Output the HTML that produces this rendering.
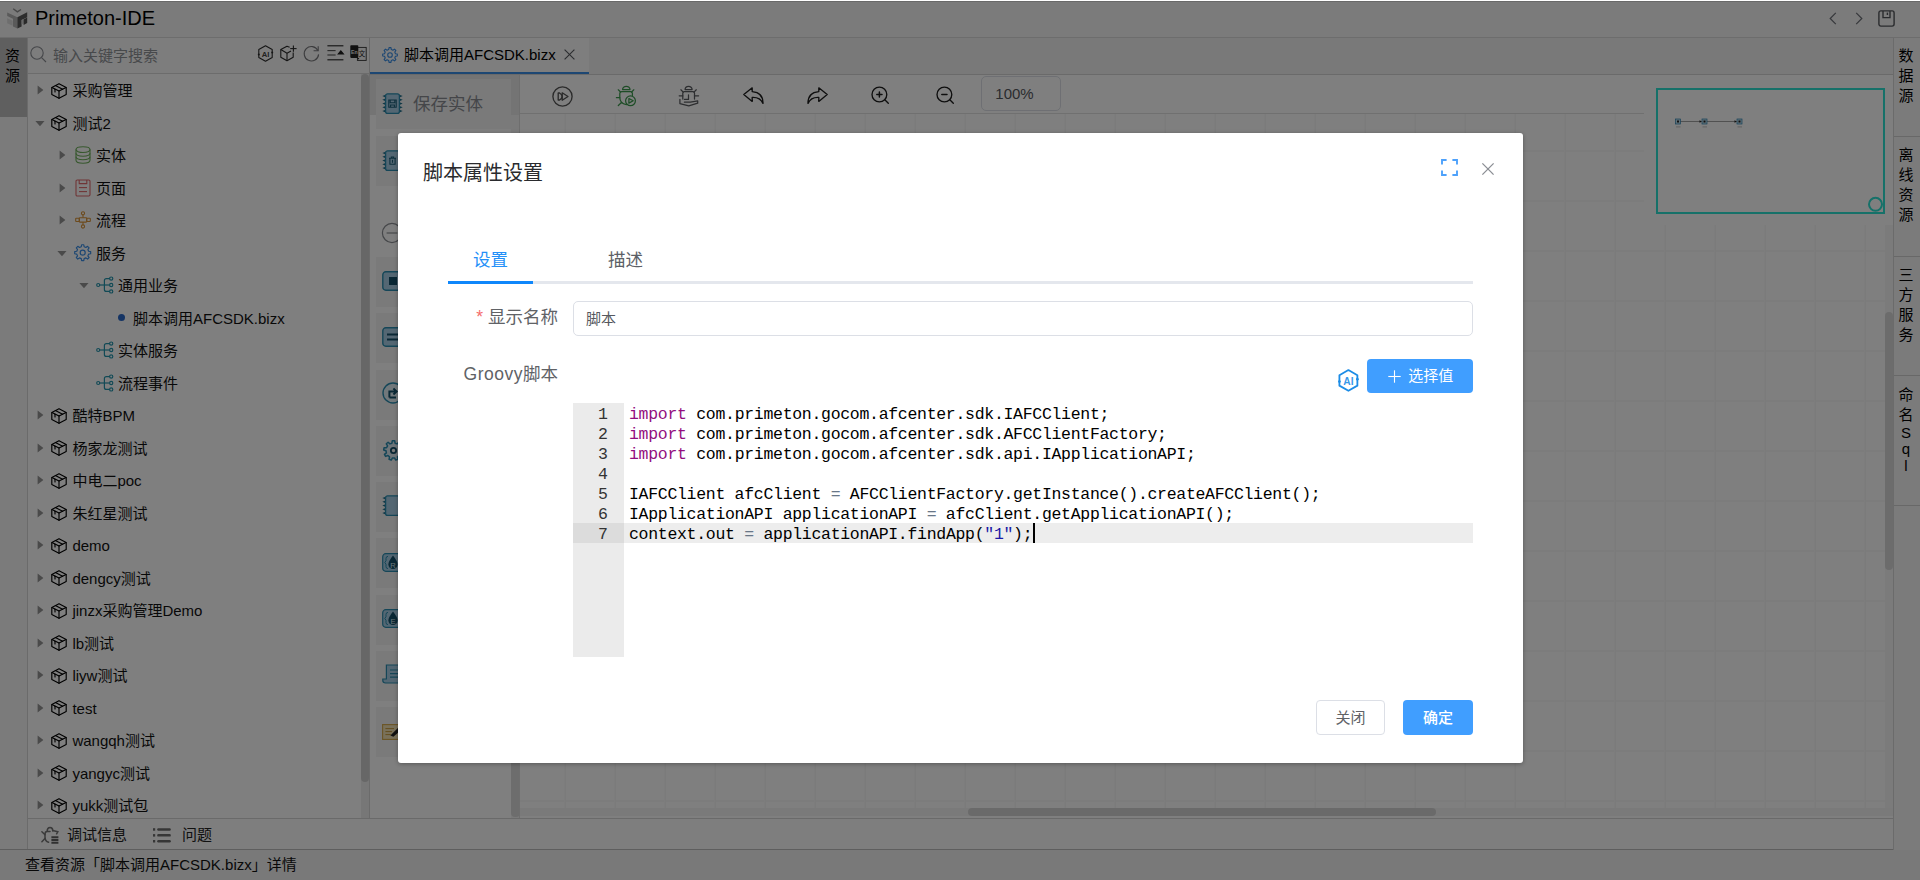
<!DOCTYPE html>
<html lang="zh-CN"><head><meta charset="utf-8"><title>Primeton-IDE</title>
<style>
*{box-sizing:border-box;margin:0;padding:0}
html,body{width:1920px;height:880px;overflow:hidden;background:#fff;font-family:"Liberation Sans","Noto Sans CJK SC",sans-serif;font-size:15px;color:#1a1a1a}
.abs{position:absolute}
svg{display:block;overflow:visible}
#app{position:absolute;left:0;top:0;width:1920px;height:880px;background:#fff;overflow:hidden;z-index:0}
#mask{position:absolute;left:0;top:0;width:1920px;height:880px;background:rgba(0,0,0,.5)}
.hdr{left:0;top:0;width:1920px;height:38px;background:#f6f6f6;border-bottom:1px solid #dadada}
.hdr .ttl{left:35px;top:0;height:37px;line-height:36px;font-size:20px;color:#000;white-space:nowrap}
.lstrip{left:0;top:38px;width:28px;height:812px;background:#f7f7f7;border-right:1px solid #d6d6d6}
.lstrip .sel{left:0;top:0;width:27px;height:79px;background:#bfbfbf}
.vtxt{width:15px;font-size:15px;line-height:20px;text-align:center;color:#000}
.sbar{left:28px;top:38px;width:342px;height:36px;background:#fafafa;border-bottom:1px solid #d8d8d8;border-right:1px solid #d2d2d2}
.sbar .ph{left:25px;top:0;line-height:35px;font-size:15px;color:#8f9297;white-space:nowrap}
.tree{left:28px;top:74px;width:342px;height:744px;background:#fff;border-right:1px solid #d6d6d6;overflow:hidden}
.row{position:absolute;left:0;width:333px;height:32.5px;white-space:nowrap}
.row .t{position:absolute;top:1px;line-height:32.5px;font-size:15px;color:#111}
.bbar{left:28px;top:818px;width:1865px;height:32px;background:#fcfcfc;border-top:1px solid #d4d4d4}
.bbar .t{top:0;line-height:31px;font-size:15px;color:#222;white-space:nowrap}
.status{left:0;top:849px;width:1920px;height:31px;background:#f3f3f3;border-top:1px solid #bcbcbc}
.status .t{left:25px;top:0;line-height:29px;font-size:15px;color:#111;white-space:nowrap}
.rstrip{left:1893px;top:38px;width:27px;height:812px;background:#f7f7f7;border-left:1px solid #d6d6d6}
.rsec{left:0;width:27px;border-bottom:1px solid #d0d0d0}
.tabs{left:370px;top:38px;width:1523px;height:37px;background:#f3f3f3;border-bottom:1px solid #d4d4d4;z-index:2}
.tab{left:0;top:0;width:219px;height:36px;background:#fdfdfd;border-bottom:2px solid #3a8ee6}
.tab .t{left:34px;top:0;line-height:33px;font-size:15px;color:#000;white-space:nowrap}
.pal{left:370px;top:74px;width:150px;height:744px;background:#fff;border-right:1px solid #dcdcdc;overflow:hidden}
.pit{position:absolute;left:6px;width:135px;height:50px;background:#f4f4f4}
.pit .t{position:absolute;left:37px;top:0;line-height:50px;font-size:17.5px;color:#8a8d93;white-space:nowrap}
.tbar{left:520px;top:74px;width:1373px;height:40px;background:#fff;border-bottom:1px solid #e0e0e0}
.zoom{left:461px;top:2px;width:80px;height:35px;border:1px solid #dcdfe6;border-radius:5px;font-size:15px;color:#55585e;line-height:33px;text-align:center;padding-right:13px}
.canvas{left:520px;top:114px;width:1373px;height:704px;background-color:#fff;
background-image:linear-gradient(to right,#fbfbfb 1px,#f6f6f6 1px,#f6f6f6 2px,transparent 2px),linear-gradient(to bottom,#f8f8f8 1px,#f8f8f8 2px,transparent 2px);background-size:50px 50px;background-position:44px 36px}
.dlg{position:absolute;left:398px;top:133px;width:1125px;height:630px;background:#fff;border-radius:3px;box-shadow:0 1px 4px rgba(0,0,0,.3)}
.dlg .title{left:25px;top:26px;font-size:20px;line-height:28px;color:#2a2b2e;white-space:nowrap}
.tabline{left:50px;top:148px;width:1025px;height:3px;background:#e4e7ed}
.tabact{left:50px;top:148px;width:85px;height:3px;background:#0f87fb}
.tb1{left:75px;top:112px;font-size:17.5px;line-height:30px;color:#2490f8;white-space:nowrap}
.tb2{left:210px;top:112px;font-size:17.5px;line-height:30px;color:#5c5f66;white-space:nowrap}
.lbl{font-size:17.5px;line-height:35px;color:#606266;white-space:nowrap;text-align:right}
.inp{left:175px;top:168px;width:900px;height:35px;border:1px solid #dcdfe6;border-radius:5px;font-size:15px;line-height:33px;color:#55585e;padding-left:12px}
.btnp{background:#409eff;color:#fff;border-radius:4px;font-size:15px;text-align:center;white-space:nowrap}
.btnd{background:#fff;color:#606266;border:1px solid #dcdfe6;border-radius:4px;font-size:15px;text-align:center;white-space:nowrap}
.ed{left:175px;top:270px;width:900px;height:254px;background:#fff;overflow:hidden;font-family:"Liberation Mono","DejaVu Sans Mono",monospace;font-size:16.5px;letter-spacing:-.3px;line-height:20px;color:#000}
.gut{left:0;top:0;width:51px;height:254px;background:#ebebeb}
.ln{position:absolute;left:0;width:34.7px;text-align:right;color:#333;height:20px}
.cl{position:absolute;left:56px;white-space:pre;height:20px}
.jp{font-family:"Liberation Sans","Noto Sans CJK JP",sans-serif}
.kw{color:#930f80}.op{color:#687687}.st{color:#1a1aa6}
</style></head>
<body>
<div id="app">
<div class="abs hdr">
<svg class="abs" style="left:6.8px;top:7.8px" width="21" height="21" viewBox="0 0 21 21"><path d="M6.2 0.7 L10.4 3.8 L14 1.5" fill="none" stroke="#909090" stroke-width="1.4"/><path d="M0.2 4.4 L10.4 9.2 L10.4 20.6 L6 18.5 L6 10.8 L0.2 8.1 Z" fill="#b4b4b4"/><path d="M0.2 10.2 L5.6 12.7 L5.6 17.8 L0.2 15.3 Z" fill="#dcdcdc"/><path d="M10.4 9.2 L20.2 4.2 L20.2 9.3 L14.6 12.1 L14.6 18.5 L10.4 20.6 Z" fill="#5a5a5a"/><path d="M14.6 12.1 L16.6 11.1 L16.6 15.6 L14.6 16.6 Z" fill="#d0d0d0"/><path d="M16.6 11.4 L20.2 9.6 L20.2 15.1 L16.6 16.9 Z" fill="#525252"/></svg>
<div class="abs ttl">Primeton-IDE</div>
<svg class="abs" style="left:1829px;top:12px" width="8" height="13" viewBox="0 0 8 13" fill="none" stroke="#6d7077" stroke-width="1.2"><path d="M6.8 0.8 L1.2 6.5 L6.8 12.2"/></svg>
<svg class="abs" style="left:1855px;top:12px" width="8" height="13" viewBox="0 0 8 13" fill="none" stroke="#6d7077" stroke-width="1.2"><path d="M1.2 0.8 L6.8 6.5 L1.2 12.2"/></svg>
<svg class="abs" style="left:1878px;top:10px" width="17" height="17" viewBox="0 0 17 17" fill="none" stroke="#55575c" stroke-width="1.4"><rect x="0.9" y="0.9" width="15.2" height="15.2" rx="2"/><path d="M5 1 V7.6 H12 V1"/><path d="M9.4 2.6 V5"/></svg>
</div>
<div class="abs lstrip"><div class="abs sel"></div><div class="abs vtxt" style="left:5px;top:7.5px">资源</div></div>
<div class="abs sbar">
<svg class="abs" style="left:2px;top:8px" width="17" height="17" viewBox="0 0 17 17" fill="none" stroke="#8a8d93" stroke-width="1.1"><circle cx="7" cy="7" r="6.2"/><path d="M11.6 11.6 L16 16"/></svg>
<div class="abs ph">输入关键字搜索</div>
<svg class="abs" style="left:228.5px;top:6.5px" width="17" height="17" viewBox="0 0 17 17"><path d="M8.5 0.8 L15.2 4.6 V12.4 L8.5 16.2 L1.8 12.4 V4.6 Z" fill="none" stroke="#2b2b2b" stroke-width="1.1" stroke-linejoin="round"/><circle cx="1.8" cy="9.4" r="1" fill="#2b2b2b"/><circle cx="15.2" cy="7.6" r="1" fill="#2b2b2b"/><text x="8.5" y="11.6" text-anchor="middle" font-family="Liberation Sans,sans-serif" font-size="7.6" font-weight="bold" fill="#2b2b2b" fill-opacity=".9">AI</text></svg>
<svg class="abs" style="left:252px;top:7px" width="17" height="17" viewBox="0 0 17 17" fill="none" stroke="#2b2b2b" stroke-width="1.1" stroke-linejoin="round"><path d="M9.6 2.2 L7 1.2 L0.8 4.6 V12.2 L7 15.8 L13.2 12.2 V7.6"/><path d="M0.8 4.6 L7 8.2 L11 6"/><path d="M7 8.2 V15.8"/><path d="M13.4 0.4 V6.8"/><path d="M10.2 3.6 H16.6"/></svg>
<svg class="abs" style="left:275px;top:7px" width="17" height="17" viewBox="0 0 17 17" fill="none" stroke="#77777b" stroke-width="1.1"><path d="M14.9 5.6 A7.2 7.2 0 1 0 15.6 9.4"/><path d="M15.2 1.2 V5.8 H10.6"/></svg>
<svg class="abs" style="left:299px;top:7px" width="17" height="16" viewBox="0 0 17 16" fill="none" stroke="#1f1f1f" stroke-width="1.1"><path d="M0.4 0.8 H16.4"/><path d="M0.4 14.8 H16.4"/><path d="M0.4 5.6 H8.6" stroke="#555"/><path d="M0.4 10 H8.6" stroke="#555"/><path d="M11.2 9 L13.8 5.8 L16.4 9 Z" fill="#1f1f1f"/></svg>
<svg class="abs" style="left:322px;top:7px" width="17" height="16" viewBox="0 0 17 16"><rect x="7.4" y="2.4" width="8.8" height="13" fill="#f4f4f4" stroke="#333" stroke-width="0.9"/><rect x="0.3" y="0.3" width="8" height="12.6" rx="0.8" fill="#222"/><path d="M7 12.9 L9.4 12.9 L8.3 14.6 Z" fill="#222"/><text x="4.3" y="8.6" text-anchor="middle" font-family="Liberation Sans,sans-serif" font-size="5.2" font-weight="bold" fill="#eee">En</text><text x="11.9" y="11.4" text-anchor="middle" font-family="Noto Sans CJK SC,sans-serif" font-size="6.4" fill="#222">文</text></svg>
</div>
<div class="abs tree">
<div class="row" style="top:0px">
<svg class="abs" style="left:8.7px;top:11px" width="7" height="10" viewBox="0 0 7 10"><path d="M0.6 0.4 L6.4 5 L0.6 9.6 Z" fill="#949494"/></svg>
<svg class="abs" style="left:23px;top:8.5px" width="16" height="16" viewBox="0 0 16 16" fill="none" stroke="#000" stroke-width="1.15" stroke-linejoin="round" stroke-linecap="round"><path d="M8 0.7 L15.2 4.4 V11.6 L8 15.3 L0.8 11.6 V4.4 Z"/><path d="M1 4.5 L8 8.1 L15 4.5"/><path d="M8 8.1 V15.2"/><path d="M4.4 2.6 L11.6 6.3"/><path d="M4 6.2 V9"/></svg>
<div class="t" style="left:44.4px">采购管理</div>
</div>
<div class="row" style="top:32.5px">
<svg class="abs" style="left:6.9px;top:13.3px" width="10" height="7" viewBox="0 0 10 7"><path d="M0.4 1 L9.5 1 L5 6.3 Z" fill="#949494"/></svg>
<svg class="abs" style="left:23px;top:8.5px" width="16" height="16" viewBox="0 0 16 16" fill="none" stroke="#000" stroke-width="1.15" stroke-linejoin="round" stroke-linecap="round"><path d="M8 0.7 L15.2 4.4 V11.6 L8 15.3 L0.8 11.6 V4.4 Z"/><path d="M1 4.5 L8 8.1 L15 4.5"/><path d="M8 8.1 V15.2"/><path d="M4.4 2.6 L11.6 6.3"/><path d="M4 6.2 V9"/></svg>
<div class="t" style="left:44.4px">测试2</div>
</div>
<div class="row" style="top:65px">
<svg class="abs" style="left:31px;top:11px" width="7" height="10" viewBox="0 0 7 10"><path d="M0.6 0.4 L6.4 5 L0.6 9.6 Z" fill="#949494"/></svg>
<svg class="abs" style="left:46.5px;top:7px" width="16" height="18" viewBox="0 0 16 18" fill="none" stroke="#6fb05c" stroke-width="1.1"><ellipse cx="8" cy="3.6" rx="7" ry="2.9"/><path d="M1 3.6 V14.2 C1 16 4 17.2 8 17.2 S15 16 15 14.2 V3.6"/><path d="M1 7.3 C1 9 4 10.2 8 10.2 S15 9 15 7.3"/><path d="M1 10.8 C1 12.5 4 13.7 8 13.7 S15 12.5 15 10.8"/></svg>
<div class="t" style="left:68px">实体</div>
</div>
<div class="row" style="top:97.5px">
<svg class="abs" style="left:31px;top:11px" width="7" height="10" viewBox="0 0 7 10"><path d="M0.6 0.4 L6.4 5 L0.6 9.6 Z" fill="#949494"/></svg>
<svg class="abs" style="left:46.5px;top:7.5px" width="16" height="18" viewBox="0 0 16 18" fill="none" stroke="#e0696c" stroke-width="1.1"><rect x="1" y="1" width="14" height="16" rx="1.2"/><path d="M4.2 1 V4.6 H11.8 V1"/><path d="M4 8.6 H12"/><path d="M4 12.6 H12"/></svg>
<div class="t" style="left:68px">页面</div>
</div>
<div class="row" style="top:130px">
<svg class="abs" style="left:31px;top:11px" width="7" height="10" viewBox="0 0 7 10"><path d="M0.6 0.4 L6.4 5 L0.6 9.6 Z" fill="#949494"/></svg>
<svg class="abs" style="left:46.9px;top:7px" width="16" height="18" viewBox="0 0 16 18" fill="none" stroke="#d9953b" stroke-width="1.1"><circle cx="8" cy="2.3" r="1.6"/><circle cx="8" cy="15.5" r="1.6"/><path d="M8 3.9 V6.7"/><path d="M8 11.1 V13.9"/><rect x="4.3" y="6.7" width="7.4" height="4.4" rx="0.6"/><rect x="0.7" y="7.3" width="3.6" height="3.2" rx="0.5"/><rect x="11.7" y="7.3" width="3.6" height="3.2" rx="0.5"/></svg>
<div class="t" style="left:68px">流程</div>
</div>
<div class="row" style="top:162.5px">
<svg class="abs" style="left:29.4px;top:13.3px" width="10" height="7" viewBox="0 0 10 7"><path d="M0.4 1 L9.5 1 L5 6.3 Z" fill="#949494"/></svg>
<svg class="abs" style="left:45.8px;top:7.7px" width="17.4" height="17.4" viewBox="0 0 16 16" fill="none" stroke="#3a8ee6" stroke-width="1.1" stroke-linejoin="round"><path d="M6.69 2.55 L7.01 0.67 L8.99 0.67 L9.31 2.55 L10.93 3.23 L12.49 2.12 L13.88 3.51 L12.77 5.07 L13.45 6.69 L15.33 7.01 L15.33 8.99 L13.45 9.31 L12.77 10.93 L13.88 12.49 L12.49 13.88 L10.93 12.77 L9.31 13.45 L8.99 15.33 L7.01 15.33 L6.69 13.45 L5.07 12.77 L3.51 13.88 L2.12 12.49 L3.23 10.93 L2.55 9.31 L0.67 8.99 L0.67 7.01 L2.55 6.69 L3.23 5.07 L2.12 3.51 L3.51 2.12 L5.07 3.23 Z"/><circle cx="8" cy="8" r="2.3"/></svg>
<div class="t" style="left:68px">服务</div>
</div>
<div class="row" style="top:195px">
<svg class="abs" style="left:51.4px;top:13.3px" width="10" height="7" viewBox="0 0 10 7"><path d="M0.4 1 L9.5 1 L5 6.3 Z" fill="#949494"/></svg>
<svg class="abs" style="left:68px;top:7px" width="18" height="18" viewBox="0 0 18 18" fill="none" stroke="#2595ad" stroke-width="1.2"><circle cx="2.2" cy="9" r="1.5"/><path d="M3.7 9 H13.6"/><path d="M13.6 2.6 H10.4 Q8.4 2.6 8.4 4.6 V13.4 Q8.4 15.4 10.4 15.4 H13.6"/><circle cx="15.2" cy="2.6" r="1.6"/><circle cx="15.2" cy="9" r="1.6"/><circle cx="15.2" cy="15.4" r="1.6"/></svg>
<div class="t" style="left:90px">通用业务</div>
</div>
<div class="row" style="top:227.5px">
<div class="abs" style="left:90.2px;top:12.8px;width:7px;height:7px;border-radius:50%;background:#2a68c8"></div>
<div class="t" style="left:105px">脚本调用AFCSDK.bizx</div>
</div>
<div class="row" style="top:260px">
<svg class="abs" style="left:68px;top:7px" width="18" height="18" viewBox="0 0 18 18" fill="none" stroke="#2595ad" stroke-width="1.2"><circle cx="2.2" cy="9" r="1.5"/><path d="M3.7 9 H13.6"/><path d="M13.6 2.6 H10.4 Q8.4 2.6 8.4 4.6 V13.4 Q8.4 15.4 10.4 15.4 H13.6"/><circle cx="15.2" cy="2.6" r="1.6"/><circle cx="15.2" cy="9" r="1.6"/><circle cx="15.2" cy="15.4" r="1.6"/></svg>
<div class="t" style="left:90px">实体服务</div>
</div>
<div class="row" style="top:292.5px">
<svg class="abs" style="left:68px;top:7px" width="18" height="18" viewBox="0 0 18 18" fill="none" stroke="#2595ad" stroke-width="1.2"><circle cx="2.2" cy="9" r="1.5"/><path d="M3.7 9 H13.6"/><path d="M13.6 2.6 H10.4 Q8.4 2.6 8.4 4.6 V13.4 Q8.4 15.4 10.4 15.4 H13.6"/><circle cx="15.2" cy="2.6" r="1.6"/><circle cx="15.2" cy="9" r="1.6"/><circle cx="15.2" cy="15.4" r="1.6"/></svg>
<div class="t" style="left:90px">流程事件</div>
</div>
<div class="row" style="top:325px">
<svg class="abs" style="left:8.7px;top:11px" width="7" height="10" viewBox="0 0 7 10"><path d="M0.6 0.4 L6.4 5 L0.6 9.6 Z" fill="#949494"/></svg>
<svg class="abs" style="left:23px;top:8.5px" width="16" height="16" viewBox="0 0 16 16" fill="none" stroke="#000" stroke-width="1.15" stroke-linejoin="round" stroke-linecap="round"><path d="M8 0.7 L15.2 4.4 V11.6 L8 15.3 L0.8 11.6 V4.4 Z"/><path d="M1 4.5 L8 8.1 L15 4.5"/><path d="M8 8.1 V15.2"/><path d="M4.4 2.6 L11.6 6.3"/><path d="M4 6.2 V9"/></svg>
<div class="t" style="left:44.4px">酷特BPM</div>
</div>
<div class="row" style="top:357.5px">
<svg class="abs" style="left:8.7px;top:11px" width="7" height="10" viewBox="0 0 7 10"><path d="M0.6 0.4 L6.4 5 L0.6 9.6 Z" fill="#949494"/></svg>
<svg class="abs" style="left:23px;top:8.5px" width="16" height="16" viewBox="0 0 16 16" fill="none" stroke="#000" stroke-width="1.15" stroke-linejoin="round" stroke-linecap="round"><path d="M8 0.7 L15.2 4.4 V11.6 L8 15.3 L0.8 11.6 V4.4 Z"/><path d="M1 4.5 L8 8.1 L15 4.5"/><path d="M8 8.1 V15.2"/><path d="M4.4 2.6 L11.6 6.3"/><path d="M4 6.2 V9"/></svg>
<div class="t" style="left:44.4px">杨家龙测试</div>
</div>
<div class="row" style="top:390px">
<svg class="abs" style="left:8.7px;top:11px" width="7" height="10" viewBox="0 0 7 10"><path d="M0.6 0.4 L6.4 5 L0.6 9.6 Z" fill="#949494"/></svg>
<svg class="abs" style="left:23px;top:8.5px" width="16" height="16" viewBox="0 0 16 16" fill="none" stroke="#000" stroke-width="1.15" stroke-linejoin="round" stroke-linecap="round"><path d="M8 0.7 L15.2 4.4 V11.6 L8 15.3 L0.8 11.6 V4.4 Z"/><path d="M1 4.5 L8 8.1 L15 4.5"/><path d="M8 8.1 V15.2"/><path d="M4.4 2.6 L11.6 6.3"/><path d="M4 6.2 V9"/></svg>
<div class="t" style="left:44.4px">中电二poc</div>
</div>
<div class="row" style="top:422.5px">
<svg class="abs" style="left:8.7px;top:11px" width="7" height="10" viewBox="0 0 7 10"><path d="M0.6 0.4 L6.4 5 L0.6 9.6 Z" fill="#949494"/></svg>
<svg class="abs" style="left:23px;top:8.5px" width="16" height="16" viewBox="0 0 16 16" fill="none" stroke="#000" stroke-width="1.15" stroke-linejoin="round" stroke-linecap="round"><path d="M8 0.7 L15.2 4.4 V11.6 L8 15.3 L0.8 11.6 V4.4 Z"/><path d="M1 4.5 L8 8.1 L15 4.5"/><path d="M8 8.1 V15.2"/><path d="M4.4 2.6 L11.6 6.3"/><path d="M4 6.2 V9"/></svg>
<div class="t" style="left:44.4px">朱红星测试</div>
</div>
<div class="row" style="top:455px">
<svg class="abs" style="left:8.7px;top:11px" width="7" height="10" viewBox="0 0 7 10"><path d="M0.6 0.4 L6.4 5 L0.6 9.6 Z" fill="#949494"/></svg>
<svg class="abs" style="left:23px;top:8.5px" width="16" height="16" viewBox="0 0 16 16" fill="none" stroke="#000" stroke-width="1.15" stroke-linejoin="round" stroke-linecap="round"><path d="M8 0.7 L15.2 4.4 V11.6 L8 15.3 L0.8 11.6 V4.4 Z"/><path d="M1 4.5 L8 8.1 L15 4.5"/><path d="M8 8.1 V15.2"/><path d="M4.4 2.6 L11.6 6.3"/><path d="M4 6.2 V9"/></svg>
<div class="t" style="left:44.4px">demo</div>
</div>
<div class="row" style="top:487.5px">
<svg class="abs" style="left:8.7px;top:11px" width="7" height="10" viewBox="0 0 7 10"><path d="M0.6 0.4 L6.4 5 L0.6 9.6 Z" fill="#949494"/></svg>
<svg class="abs" style="left:23px;top:8.5px" width="16" height="16" viewBox="0 0 16 16" fill="none" stroke="#000" stroke-width="1.15" stroke-linejoin="round" stroke-linecap="round"><path d="M8 0.7 L15.2 4.4 V11.6 L8 15.3 L0.8 11.6 V4.4 Z"/><path d="M1 4.5 L8 8.1 L15 4.5"/><path d="M8 8.1 V15.2"/><path d="M4.4 2.6 L11.6 6.3"/><path d="M4 6.2 V9"/></svg>
<div class="t" style="left:44.4px">dengcy测试</div>
</div>
<div class="row" style="top:520px">
<svg class="abs" style="left:8.7px;top:11px" width="7" height="10" viewBox="0 0 7 10"><path d="M0.6 0.4 L6.4 5 L0.6 9.6 Z" fill="#949494"/></svg>
<svg class="abs" style="left:23px;top:8.5px" width="16" height="16" viewBox="0 0 16 16" fill="none" stroke="#000" stroke-width="1.15" stroke-linejoin="round" stroke-linecap="round"><path d="M8 0.7 L15.2 4.4 V11.6 L8 15.3 L0.8 11.6 V4.4 Z"/><path d="M1 4.5 L8 8.1 L15 4.5"/><path d="M8 8.1 V15.2"/><path d="M4.4 2.6 L11.6 6.3"/><path d="M4 6.2 V9"/></svg>
<div class="t" style="left:44.4px">jinzx采购管理Demo</div>
</div>
<div class="row" style="top:552.5px">
<svg class="abs" style="left:8.7px;top:11px" width="7" height="10" viewBox="0 0 7 10"><path d="M0.6 0.4 L6.4 5 L0.6 9.6 Z" fill="#949494"/></svg>
<svg class="abs" style="left:23px;top:8.5px" width="16" height="16" viewBox="0 0 16 16" fill="none" stroke="#000" stroke-width="1.15" stroke-linejoin="round" stroke-linecap="round"><path d="M8 0.7 L15.2 4.4 V11.6 L8 15.3 L0.8 11.6 V4.4 Z"/><path d="M1 4.5 L8 8.1 L15 4.5"/><path d="M8 8.1 V15.2"/><path d="M4.4 2.6 L11.6 6.3"/><path d="M4 6.2 V9"/></svg>
<div class="t" style="left:44.4px">lb测试</div>
</div>
<div class="row" style="top:585px">
<svg class="abs" style="left:8.7px;top:11px" width="7" height="10" viewBox="0 0 7 10"><path d="M0.6 0.4 L6.4 5 L0.6 9.6 Z" fill="#949494"/></svg>
<svg class="abs" style="left:23px;top:8.5px" width="16" height="16" viewBox="0 0 16 16" fill="none" stroke="#000" stroke-width="1.15" stroke-linejoin="round" stroke-linecap="round"><path d="M8 0.7 L15.2 4.4 V11.6 L8 15.3 L0.8 11.6 V4.4 Z"/><path d="M1 4.5 L8 8.1 L15 4.5"/><path d="M8 8.1 V15.2"/><path d="M4.4 2.6 L11.6 6.3"/><path d="M4 6.2 V9"/></svg>
<div class="t" style="left:44.4px">liyw测试</div>
</div>
<div class="row" style="top:617.5px">
<svg class="abs" style="left:8.7px;top:11px" width="7" height="10" viewBox="0 0 7 10"><path d="M0.6 0.4 L6.4 5 L0.6 9.6 Z" fill="#949494"/></svg>
<svg class="abs" style="left:23px;top:8.5px" width="16" height="16" viewBox="0 0 16 16" fill="none" stroke="#000" stroke-width="1.15" stroke-linejoin="round" stroke-linecap="round"><path d="M8 0.7 L15.2 4.4 V11.6 L8 15.3 L0.8 11.6 V4.4 Z"/><path d="M1 4.5 L8 8.1 L15 4.5"/><path d="M8 8.1 V15.2"/><path d="M4.4 2.6 L11.6 6.3"/><path d="M4 6.2 V9"/></svg>
<div class="t" style="left:44.4px">test</div>
</div>
<div class="row" style="top:650px">
<svg class="abs" style="left:8.7px;top:11px" width="7" height="10" viewBox="0 0 7 10"><path d="M0.6 0.4 L6.4 5 L0.6 9.6 Z" fill="#949494"/></svg>
<svg class="abs" style="left:23px;top:8.5px" width="16" height="16" viewBox="0 0 16 16" fill="none" stroke="#000" stroke-width="1.15" stroke-linejoin="round" stroke-linecap="round"><path d="M8 0.7 L15.2 4.4 V11.6 L8 15.3 L0.8 11.6 V4.4 Z"/><path d="M1 4.5 L8 8.1 L15 4.5"/><path d="M8 8.1 V15.2"/><path d="M4.4 2.6 L11.6 6.3"/><path d="M4 6.2 V9"/></svg>
<div class="t" style="left:44.4px">wangqh测试</div>
</div>
<div class="row" style="top:682.5px">
<svg class="abs" style="left:8.7px;top:11px" width="7" height="10" viewBox="0 0 7 10"><path d="M0.6 0.4 L6.4 5 L0.6 9.6 Z" fill="#949494"/></svg>
<svg class="abs" style="left:23px;top:8.5px" width="16" height="16" viewBox="0 0 16 16" fill="none" stroke="#000" stroke-width="1.15" stroke-linejoin="round" stroke-linecap="round"><path d="M8 0.7 L15.2 4.4 V11.6 L8 15.3 L0.8 11.6 V4.4 Z"/><path d="M1 4.5 L8 8.1 L15 4.5"/><path d="M8 8.1 V15.2"/><path d="M4.4 2.6 L11.6 6.3"/><path d="M4 6.2 V9"/></svg>
<div class="t" style="left:44.4px">yangyc测试</div>
</div>
<div class="row" style="top:715px">
<svg class="abs" style="left:8.7px;top:11px" width="7" height="10" viewBox="0 0 7 10"><path d="M0.6 0.4 L6.4 5 L0.6 9.6 Z" fill="#949494"/></svg>
<svg class="abs" style="left:23px;top:8.5px" width="16" height="16" viewBox="0 0 16 16" fill="none" stroke="#000" stroke-width="1.15" stroke-linejoin="round" stroke-linecap="round"><path d="M8 0.7 L15.2 4.4 V11.6 L8 15.3 L0.8 11.6 V4.4 Z"/><path d="M1 4.5 L8 8.1 L15 4.5"/><path d="M8 8.1 V15.2"/><path d="M4.4 2.6 L11.6 6.3"/><path d="M4 6.2 V9"/></svg>
<div class="t" style="left:44.4px">yukk测试包</div>
</div>
<div class="abs" style="left:333px;top:0;width:8px;height:744px;background:#efefef"></div>
<div class="abs" style="left:333px;top:0;width:8px;height:708px;background:#cfcfcf;border-radius:4px"></div>
</div>
<div class="abs bbar">
<svg class="abs" style="left:13px;top:7px" width="19" height="18" viewBox="0 0 19 18" fill="none" stroke="#747474" stroke-width="1.5" stroke-linecap="round"><path d="M6.2 5 Q6.2 1.6 9 1.6 Q11.8 1.6 11.8 5"/><path d="M11.8 4.6 L16.8 5.8 L15.6 7.8"/><path d="M9 5.4 H6.2 Q4 5.4 4 8 V11 Q4 15.4 7.6 16.2"/><path d="M4 8.8 L0.9 5.8"/><path d="M4 12.4 L0.9 15.8"/><path d="M10.4 11.2 H17.4 M10.4 14 H17.4 M10.4 16.8 H17.4" stroke-width="1.9" stroke-linecap="butt" stroke="#606060"/></svg>
<div class="abs t" style="left:39px">调试信息</div>
<svg class="abs" style="left:125px;top:8.6px" width="18" height="15" viewBox="0 0 18 15" fill="#6c6c6c"><rect x="0" y="0.2" width="2.2" height="2.5"/><rect x="4.2" y="0.2" width="13.6" height="2.5" rx="1.2"/><rect x="0" y="6.1" width="2.2" height="2.5"/><rect x="4.2" y="6.1" width="13.6" height="2.5" rx="1.2"/><rect x="0" y="12" width="2.2" height="2.5"/><rect x="4.2" y="12" width="13.6" height="2.5" rx="1.2"/></svg>
<div class="abs t" style="left:154px">问题</div>
</div>
<div class="abs status"><div class="abs t">查看资源<span class="jp">「</span>脚本调用AFCSDK.bizx<span class="jp">」</span>详情</div></div>
<div class="abs rstrip">
<div class="abs rsec" style="top:0px;height:99px"><div class="abs vtxt" style="left:4.5px;top:7.5px"><div style="height:20px;line-height:20px">数</div><div style="height:20px;line-height:20px">据</div><div style="height:20px;line-height:20px">源</div></div></div>
<div class="abs rsec" style="top:99px;height:120px"><div class="abs vtxt" style="left:4.5px;top:8px"><div style="height:20px;line-height:20px">离</div><div style="height:20px;line-height:20px">线</div><div style="height:20px;line-height:20px">资</div><div style="height:20px;line-height:20px">源</div></div></div>
<div class="abs rsec" style="top:219px;height:119px"><div class="abs vtxt" style="left:4.5px;top:8px"><div style="height:20px;line-height:20px">三</div><div style="height:20px;line-height:20px">方</div><div style="height:20px;line-height:20px">服</div><div style="height:20px;line-height:20px">务</div></div></div>
<div class="abs rsec" style="top:338px;height:130px"><div class="abs vtxt" style="left:4.5px;top:8.5px"><div style="height:20px;line-height:20px">命</div><div style="height:20px;line-height:20px">名</div><div style="height:16.8px;line-height:16.2px">S</div><div style="height:16.8px;line-height:16.2px">q</div><div style="height:16.8px;line-height:16.2px">l</div></div></div>
</div>
<div class="abs tabs"><div class="abs tab">
<svg class="abs" style="left:11.5px;top:8.5px" width="16" height="16" viewBox="0 0 16 16" fill="none" stroke="#3a8ee6" stroke-width="1.1" stroke-linejoin="round"><path d="M6.69 2.55 L7.01 0.67 L8.99 0.67 L9.31 2.55 L10.93 3.23 L12.49 2.12 L13.88 3.51 L12.77 5.07 L13.45 6.69 L15.33 7.01 L15.33 8.99 L13.45 9.31 L12.77 10.93 L13.88 12.49 L12.49 13.88 L10.93 12.77 L9.31 13.45 L8.99 15.33 L7.01 15.33 L6.69 13.45 L5.07 12.77 L3.51 13.88 L2.12 12.49 L3.23 10.93 L2.55 9.31 L0.67 8.99 L0.67 7.01 L2.55 6.69 L3.23 5.07 L2.12 3.51 L3.51 2.12 L5.07 3.23 Z"/><circle cx="8" cy="8" r="2.3"/></svg>
<div class="abs t">脚本调用AFCSDK.bizx</div>
<svg class="abs" style="left:194px;top:11px" width="11" height="11" viewBox="0 0 11 11" fill="none" stroke="#55585e" stroke-width="1.1"><path d="M0.6 0.6 L10.4 10.4"/><path d="M10.4 0.6 L0.6 10.4"/></svg>
</div></div>
<div class="abs pal">
<div class="abs" style="left:0;top:0;width:150px;height:41px;background:#e8e8e8"></div>
<div class="pit" style="top:5px">
</div>
<div class="pit" style="top:61.75px">
</div>
<div class="pit" style="top:183px">
</div>
<div class="pit" style="top:239.25px">
</div>
<div class="pit" style="top:295.5px">
</div>
<div class="pit" style="top:351.75px">
</div>
<div class="pit" style="top:408px">
</div>
<div class="pit" style="top:464.25px">
</div>
<div class="pit" style="top:520.5px">
</div>
<div class="pit" style="top:576.75px">
</div>
<div class="pit" style="top:633px">
</div>
<div class="pit" style="top:5px;background:none"><div class="t">保存实体</div></div>
<svg class="abs" style="left:12px;top:19px" width="21" height="21.2" viewBox="0 0 21 22" preserveAspectRatio="none"><path d="M3.6 1.7 L0.3 3.2 L3.6 4.7 Z" fill="#1f6f8c"/><path d="M17.4 1.7 L20.7 3.2 L17.4 4.7 Z" fill="#1f6f8c"/><path d="M3.6 5.6 L0.3 7.1 L3.6 8.6 Z" fill="#1f6f8c"/><path d="M17.4 5.6 L20.7 7.1 L17.4 8.6 Z" fill="#1f6f8c"/><path d="M3.6 9.5 L0.3 11.0 L3.6 12.5 Z" fill="#1f6f8c"/><path d="M17.4 9.5 L20.7 11.0 L17.4 12.5 Z" fill="#1f6f8c"/><path d="M3.6 13.4 L0.3 14.9 L3.6 16.4 Z" fill="#1f6f8c"/><path d="M17.4 13.4 L20.7 14.9 L17.4 16.4 Z" fill="#1f6f8c"/><path d="M3.6 17.3 L0.3 18.8 L3.6 20.3 Z" fill="#1f6f8c"/><path d="M17.4 17.3 L20.7 18.8 L17.4 20.3 Z" fill="#1f6f8c"/><rect x="3.6" y="0.8" width="13.8" height="20.4" rx="2" fill="#a8cfe6" stroke="#2a8db0" stroke-width="1.3"/><path d="M6.8 7.2 H14.2 V14.8 H6.8 Z M8.2 7.2 V10.2 H12.8 V7.2 M8.6 14.8 V12.4 H12.4 V14.8" fill="none" stroke="#1d5f7a" stroke-width="1.1"/></svg>
<svg class="abs" style="left:12px;top:75.9px" width="21" height="21.2" viewBox="0 0 21 22" preserveAspectRatio="none"><path d="M3.6 1.7 L0.3 3.2 L3.6 4.7 Z" fill="#1f6f8c"/><path d="M17.4 1.7 L20.7 3.2 L17.4 4.7 Z" fill="#1f6f8c"/><path d="M3.6 5.6 L0.3 7.1 L3.6 8.6 Z" fill="#1f6f8c"/><path d="M17.4 5.6 L20.7 7.1 L17.4 8.6 Z" fill="#1f6f8c"/><path d="M3.6 9.5 L0.3 11.0 L3.6 12.5 Z" fill="#1f6f8c"/><path d="M17.4 9.5 L20.7 11.0 L17.4 12.5 Z" fill="#1f6f8c"/><path d="M3.6 13.4 L0.3 14.9 L3.6 16.4 Z" fill="#1f6f8c"/><path d="M17.4 13.4 L20.7 14.9 L17.4 16.4 Z" fill="#1f6f8c"/><path d="M3.6 17.3 L0.3 18.8 L3.6 20.3 Z" fill="#1f6f8c"/><path d="M17.4 17.3 L20.7 18.8 L17.4 20.3 Z" fill="#1f6f8c"/><rect x="3.6" y="0.8" width="13.8" height="20.4" rx="2" fill="#a8cfe6" stroke="#2a8db0" stroke-width="1.3"/><path d="M7 8.6 H14 M7.9 8.6 V14.8 H13.1 V8.6 M9.4 8.6 V7.2 H11.6 V8.6 M10.5 10.2 V13.2" fill="none" stroke="#1d5f7a" stroke-width="1.1"/></svg>
<svg class="abs" style="left:10.8px;top:148px" width="22" height="22" viewBox="0 0 22 22" fill="none" stroke="#8c8f94" stroke-width="1.2"><circle cx="11" cy="11" r="9.6"/><path d="M5.6 11 H16.4"/></svg>
<svg class="abs" style="left:12px;top:197px" width="22" height="20" viewBox="0 0 22 20"><rect x="0.8" y="0.8" width="20.4" height="18.4" rx="3" fill="#a8cfe6" stroke="#2a8db0" stroke-width="1.4"/><rect x="7" y="6" width="8" height="8" fill="#14506a"/></svg>
<svg class="abs" style="left:12px;top:253px" width="22" height="20" viewBox="0 0 22 20"><rect x="0.8" y="0.8" width="20.4" height="18.4" rx="3" fill="#a8cfe6" stroke="#2a8db0" stroke-width="1.4"/><path d="M5 7.4 H17 M5 12.6 H17" stroke="#14506a" stroke-width="2"/></svg>
<svg class="abs" style="left:12px;top:308px" width="22" height="22" viewBox="0 0 22 22"><circle cx="11" cy="11" r="10" fill="#e3f0f7" stroke="#2a8db0" stroke-width="1.4"/><path d="M7.4 15.4 V9.4 H13 M11.4 6.4 L14.6 9.4 L11.4 12.4 M7.4 15.4 H14" fill="none" stroke="#14506a" stroke-width="2"/></svg>
<svg class="abs" style="left:12.6px;top:365.5px" width="21" height="21" viewBox="0 0 16 16"><path d="M6.81 2.42 L7.11 0.55 L8.89 0.55 L9.19 2.42 L10.68 2.97 L12.11 1.72 L13.47 2.87 L12.49 4.49 L13.28 5.86 L15.18 5.83 L15.49 7.58 L13.70 8.20 L13.42 9.76 L14.89 10.95 L14.01 12.49 L12.24 11.81 L11.02 12.83 L11.38 14.69 L9.71 15.30 L8.79 13.64 L7.21 13.64 L6.29 15.30 L4.62 14.69 L4.98 12.83 L3.76 11.81 L1.99 12.49 L1.11 10.95 L2.58 9.76 L2.30 8.20 L0.51 7.58 L0.82 5.83 L2.72 5.86 L3.51 4.49 L2.53 2.87 L3.89 1.72 L5.32 2.97 Z" fill="#dcebf3" stroke="#2a8db0" stroke-width="1.15" stroke-linejoin="round"/><circle cx="8" cy="8" r="2" fill="#f4f4f4" stroke="#14506a" stroke-width="1.4"/></svg>
<svg class="abs" style="left:12px;top:421px" width="21" height="21.2" viewBox="0 0 21 22" preserveAspectRatio="none"><path d="M3.6 1.7 L0.3 3.2 L3.6 4.7 Z" fill="#1f6f8c"/><path d="M17.4 1.7 L20.7 3.2 L17.4 4.7 Z" fill="#1f6f8c"/><path d="M3.6 5.6 L0.3 7.1 L3.6 8.6 Z" fill="#1f6f8c"/><path d="M17.4 5.6 L20.7 7.1 L17.4 8.6 Z" fill="#1f6f8c"/><path d="M3.6 9.5 L0.3 11.0 L3.6 12.5 Z" fill="#1f6f8c"/><path d="M17.4 9.5 L20.7 11.0 L17.4 12.5 Z" fill="#1f6f8c"/><path d="M3.6 13.4 L0.3 14.9 L3.6 16.4 Z" fill="#1f6f8c"/><path d="M17.4 13.4 L20.7 14.9 L17.4 16.4 Z" fill="#1f6f8c"/><path d="M3.6 17.3 L0.3 18.8 L3.6 20.3 Z" fill="#1f6f8c"/><path d="M17.4 17.3 L20.7 18.8 L17.4 20.3 Z" fill="#1f6f8c"/><rect x="3.6" y="0.8" width="13.8" height="20.4" rx="2" fill="#a8cfe6" stroke="#2a8db0" stroke-width="1.3"/></svg>
<svg class="abs" style="left:12px;top:478.5px" width="24" height="19" viewBox="0 0 24 19"><rect x="0.7" y="0.7" width="22.6" height="17.6" rx="3" fill="#a8cfe6" stroke="#2a8db0" stroke-width="1.2"/><path d="M6 3.4 Q4 3.4 4 5.4 V7.8 L2.8 9.5 L4 11.2 V13.6 Q4 15.6 6 15.6" fill="none" stroke="#2a8db0" stroke-width="1"/><path d="M11 2.6 Q15.6 8.4 15.6 11.4 A4.6 4.6 0 0 1 6.4 11.4 Q6.4 8.4 11 2.6 Z" fill="#14506a"/><text x="11" y="14.6" text-anchor="middle" font-family="Liberation Sans,sans-serif" font-size="7.5" fill="#d6e8f2">R</text></svg>
<svg class="abs" style="left:12px;top:534.75px" width="24" height="19" viewBox="0 0 24 19"><rect x="0.7" y="0.7" width="22.6" height="17.6" rx="3" fill="#a8cfe6" stroke="#2a8db0" stroke-width="1.2"/><path d="M6 3.4 Q4 3.4 4 5.4 V7.8 L2.8 9.5 L4 11.2 V13.6 Q4 15.6 6 15.6" fill="none" stroke="#2a8db0" stroke-width="1"/><path d="M11 2.6 Q15.6 8.4 15.6 11.4 A4.6 4.6 0 0 1 6.4 11.4 Q6.4 8.4 11 2.6 Z" fill="#14506a"/><text x="11" y="14.6" text-anchor="middle" font-family="Liberation Sans,sans-serif" font-size="7.5" fill="#d6e8f2">E</text></svg>
<svg class="abs" style="left:12px;top:590px" width="22" height="20" viewBox="0 0 22 20" fill="#a8cfe6" stroke="#2a8db0" stroke-width="1.2"><path d="M4.4 1 H21 V15.6 Q21 19 17.6 19 H3.6 Q0.8 19 0.8 16.4 V15 H4.4 Z"/><path d="M8 6 H17 M8 9.6 H17 M8 13.2 H17"/></svg>
<svg class="abs" style="left:12px;top:650px" width="24" height="16" viewBox="0 0 24 16"><rect x="0.6" y="0.6" width="21" height="14.8" fill="#f3e2b4" stroke="#d5a94a" stroke-width="1.1"/><path d="M3.4 4.6 H12 M3.4 7.6 H10 M3.4 10.6 H9" stroke="#c79a3c" stroke-width="1"/><path d="M8.4 11.4 L18.4 1.6 L21.4 4 L11.4 12.8 Z" fill="#222"/></svg>
<div class="abs" style="left:141px;top:41px;width:8.5px;height:703px;background:#f5f5f5"></div>
<div class="abs" style="left:141px;top:80px;width:8.5px;height:662.5px;background:#dbdbdb;border-radius:4px"></div>
</div>
<div class="abs tbar">
<svg class="abs" style="left:31.5px;top:11.8px" width="21" height="21" viewBox="0 0 21 21" fill="none" stroke="#565656" stroke-width="1.35" stroke-linejoin="round"><circle cx="10.5" cy="10.5" r="9.6"/><path d="M6.2 7 H7.6 Q10.2 8.6 10.2 10.5 Q10.2 12.4 7.6 14 H6.2 Z"/><path d="M10.2 6.8 L16 10.5 L10.2 14.2 Z"/></svg>
<svg class="abs" style="left:96px;top:12px" width="20" height="20" viewBox="0 0 20 20" fill="none" stroke="#3d9a4e" stroke-width="1.25" stroke-linecap="round" stroke-linejoin="round"><path d="M6.6 3.5 A3.7 3.2 0 0 1 14 3.5 Z"/><path d="M2.3 3.8 L4.7 6.1"/><path d="M17.8 3.8 L15.5 6.1"/><path d="M10.4 18.6 Q3.8 17.4 3.8 11.5 V7.4 Q3.8 5.7 5.5 5.7 H14.7 Q16.4 5.7 16.4 7.4 V9.6"/><path d="M0.4 11.7 H3.8"/><path d="M2.3 19.5 L5.2 16.7"/><circle cx="14.5" cy="14.8" r="4.9"/><path d="M12.9 12.5 L17.2 14.8 L12.9 17.1 Z"/></svg>
<svg class="abs" style="left:159px;top:12px" width="20" height="20" viewBox="0 0 20 20" fill="none" stroke="#5a5c60" stroke-width="1.25" stroke-linecap="round" stroke-linejoin="round"><path d="M6.1 3.5 A3.5 3.2 0 0 1 13.1 3.5 Z"/><path d="M1.9 3.8 L4.2 6.1"/><path d="M17.3 3.8 L15 6.1"/><path d="M3.8 13 V7.2 Q3.8 5.7 5.3 5.7 H14 Q15.5 5.7 15.5 7.2 V13"/><path d="M0.2 9.8 H3.8"/><path d="M15.5 9.8 H19.6"/><path d="M9.5 8.8 V13.4 H5.4"/><path d="M0.9 13.4 V17.6 L9.8 19.8 L18.7 17.2 V14.8 L11.4 16.2 H5.4"/></svg>
<svg class="abs" style="left:223px;top:13px" width="21" height="17" viewBox="0 0 21 17" fill="none" stroke="#1d1d1d" stroke-width="1.35" stroke-linejoin="round"><path d="M9.2 0.8 L0.8 7.6 L9.2 14.4 V10.4 Q17.2 10 20 16.4 Q20.2 5.4 9.2 4.6 Z"/></svg>
<svg class="abs" style="left:286.5px;top:13px" width="21" height="17" viewBox="0 0 21 17" fill="none" stroke="#1d1d1d" stroke-width="1.35" stroke-linejoin="round"><path d="M11.8 0.8 L20.2 7.6 L11.8 14.4 V10.4 Q3.8 10 1 16.4 Q0.8 5.4 11.8 4.6 Z"/></svg>
<svg class="abs" style="left:351.4px;top:11.5px" width="18" height="18" viewBox="0 0 18 18" fill="none" stroke="#1d1d1d" stroke-width="1.35" stroke-linecap="round"><circle cx="8.4" cy="8.5" r="7.4"/><path d="M13.8 13.8 L17.3 17.2"/><path d="M5.8 8.5 H11 M8.4 5.9 V11.1" stroke-width="1.5"/></svg>
<svg class="abs" style="left:415.5px;top:11.5px" width="18" height="18" viewBox="0 0 18 18" fill="none" stroke="#1d1d1d" stroke-width="1.35" stroke-linecap="round"><circle cx="8.4" cy="8.5" r="7.4"/><path d="M13.8 13.8 L17.3 17.2"/><path d="M5.8 8.5 H11" stroke-width="1.5"/></svg>
<div class="abs zoom">100%</div>
</div>
<div class="abs canvas">
<div class="abs" style="left:1124px;top:-39px;width:249px;height:149.5px;background:#fff"></div>
<div class="abs" style="left:1136px;top:-26px;width:229px;height:126px;background:#fff;border:2px solid #2ce2d2"></div>
<svg class="abs" style="left:1137px;top:-26px" width="228" height="126" viewBox="0 0 228 126"><circle cx="218.5" cy="116.3" r="6.5" fill="#fff" stroke="#2ce2d2" stroke-width="2"/><g transform="translate(0,-1.5)"><g stroke="#444" stroke-width="0.5" fill="none"><path d="M22 35 H44 M50 35 H79"/></g><g fill="#bfe0f0" stroke="#2a7fb0" stroke-width="0.7"><rect x="18.5" y="32.5" width="5" height="5"/><rect x="45" y="32.5" width="5" height="5"/><rect x="80" y="32.5" width="5" height="5"/></g><g fill="#222"><rect x="20" y="34" width="2" height="2"/><rect x="46.5" y="34" width="2" height="2"/><rect x="81.5" y="34" width="2" height="2"/><path d="M42.5 33.8 L45 35 L42.5 36.2 Z M77.5 33.8 L80 35 L77.5 36.2 Z"/></g><g stroke="#999" stroke-width="0.6"><path d="M19 40.4 H23.5 M45.5 40.4 H50 M80.5 40.4 H85"/></g></g></svg>
<div class="abs" style="left:0;top:694px;width:1373px;height:8px;background:#f5f5f5"></div>
<div class="abs" style="left:0;top:702px;width:1373px;height:2px;background:#fff"></div>
<div class="abs" style="left:1365px;top:110.5px;width:8px;height:583.5px;background:#f7f7f7"></div>
<div class="abs" style="left:448px;top:694px;width:468px;height:8px;background:#d4d4d4;border-radius:4px"></div>
<div class="abs" style="left:1365px;top:198px;width:8px;height:258px;background:#d9d9d9;border-radius:4px"></div>
</div>
</div>
<div id="mask"></div>
<div class="abs" style="left:0;top:0;width:1920px;height:1px;background:#fff"></div><div class="abs" style="left:0;top:1px;width:1920px;height:1px;background:rgba(0,0,0,.14)"></div>
<div class="dlg">
<div class="abs title">脚本属性设置</div>
<svg class="abs" style="left:1042.5px;top:26px" width="17" height="17" viewBox="0 0 17 17" fill="none" stroke="#4da1fb" stroke-width="1.9"><path d="M1 5.6 V1 H5.6"/><path d="M11.4 1 H16 V5.6"/><path d="M16 11.4 V16 H11.4"/><path d="M5.6 16 H1 V11.4"/></svg>
<svg class="abs" style="left:1083.5px;top:29.5px" width="12" height="12" viewBox="0 0 12 12" fill="none" stroke="#8a8d93" stroke-width="1.25"><path d="M0.4 0.4 L11.6 11.6"/><path d="M11.6 0.4 L0.4 11.6"/></svg>
<div class="abs tb1">设置</div><div class="abs tb2">描述</div>
<div class="abs tabline"></div><div class="abs tabact"></div>
<div class="abs lbl" style="left:0;top:166.5px;width:160px"><span style="color:#f56c6c;margin-right:5px">*</span>显示名称</div>
<div class="abs inp">脚本</div>
<div class="abs lbl" style="left:0;top:224px;width:160px"><span style="letter-spacing:.5px">Groovy</span>脚本</div>
<svg class="abs" style="left:938.6px;top:235.6px" width="22.8" height="22.8" viewBox="0 0 17 17"><path d="M8.5 0.8 L15.2 4.6 V12.4 L8.5 16.2 L1.8 12.4 V4.6 Z" fill="none" stroke="#1c8ce6" stroke-width="1.35" stroke-linejoin="round"/><circle cx="1.8" cy="9.4" r="1" fill="#1c8ce6"/><circle cx="15.2" cy="7.6" r="1" fill="#1c8ce6"/><text x="8.5" y="11.6" text-anchor="middle" font-family="Liberation Sans,sans-serif" font-size="7.6" font-weight="bold" fill="#1c8ce6" fill-opacity=".9">AI</text></svg>
<div class="abs btnp" style="left:969px;top:226px;width:106px;height:34px;line-height:33px;padding-left:21.5px">选择值</div>
<svg class="abs" style="left:990px;top:237px" width="13" height="13" viewBox="0 0 13 13" stroke="#fff" stroke-width="1.1" fill="none"><path d="M6.5 0.3 V12.7"/><path d="M0.3 6.5 H12.7"/></svg>
<div class="abs ed"><div class="abs gut"></div>
<div class="abs" style="left:0;top:120px;width:51px;height:20px;background:#dcdcdc"></div>
<div class="abs" style="left:51px;top:120px;width:849px;height:20px;background:#ededed"></div>
<div class="ln" style="top:2px">1</div>
<div class="cl" style="top:2px"><span class="kw">import</span> com.primeton.gocom.afcenter.sdk.IAFCClient;</div>
<div class="ln" style="top:22px">2</div>
<div class="cl" style="top:22px"><span class="kw">import</span> com.primeton.gocom.afcenter.sdk.AFCClientFactory;</div>
<div class="ln" style="top:42px">3</div>
<div class="cl" style="top:42px"><span class="kw">import</span> com.primeton.gocom.afcenter.sdk.api.IApplicationAPI;</div>
<div class="ln" style="top:62px">4</div>
<div class="cl" style="top:62px"></div>
<div class="ln" style="top:82px">5</div>
<div class="cl" style="top:82px">IAFCClient afcClient <span class="op">=</span> AFCClientFactory.getInstance().createAFCClient();</div>
<div class="ln" style="top:102px">6</div>
<div class="cl" style="top:102px">IApplicationAPI applicationAPI <span class="op">=</span> afcClient.getApplicationAPI();</div>
<div class="ln" style="top:122px">7</div>
<div class="cl" style="top:122px">context.out <span class="op">=</span> applicationAPI.findApp(<span class="st">"1"</span>);</div>
<div class="abs" style="left:460px;top:120px;width:2px;height:20px;background:#000"></div>
</div>
<div class="abs btnd" style="left:918px;top:567px;width:69px;height:35px;line-height:33px">关闭</div>
<div class="abs btnp" style="left:1005px;top:567px;width:70px;height:35px;line-height:35.5px;font-weight:500">确定</div>
</div>
</body></html>
